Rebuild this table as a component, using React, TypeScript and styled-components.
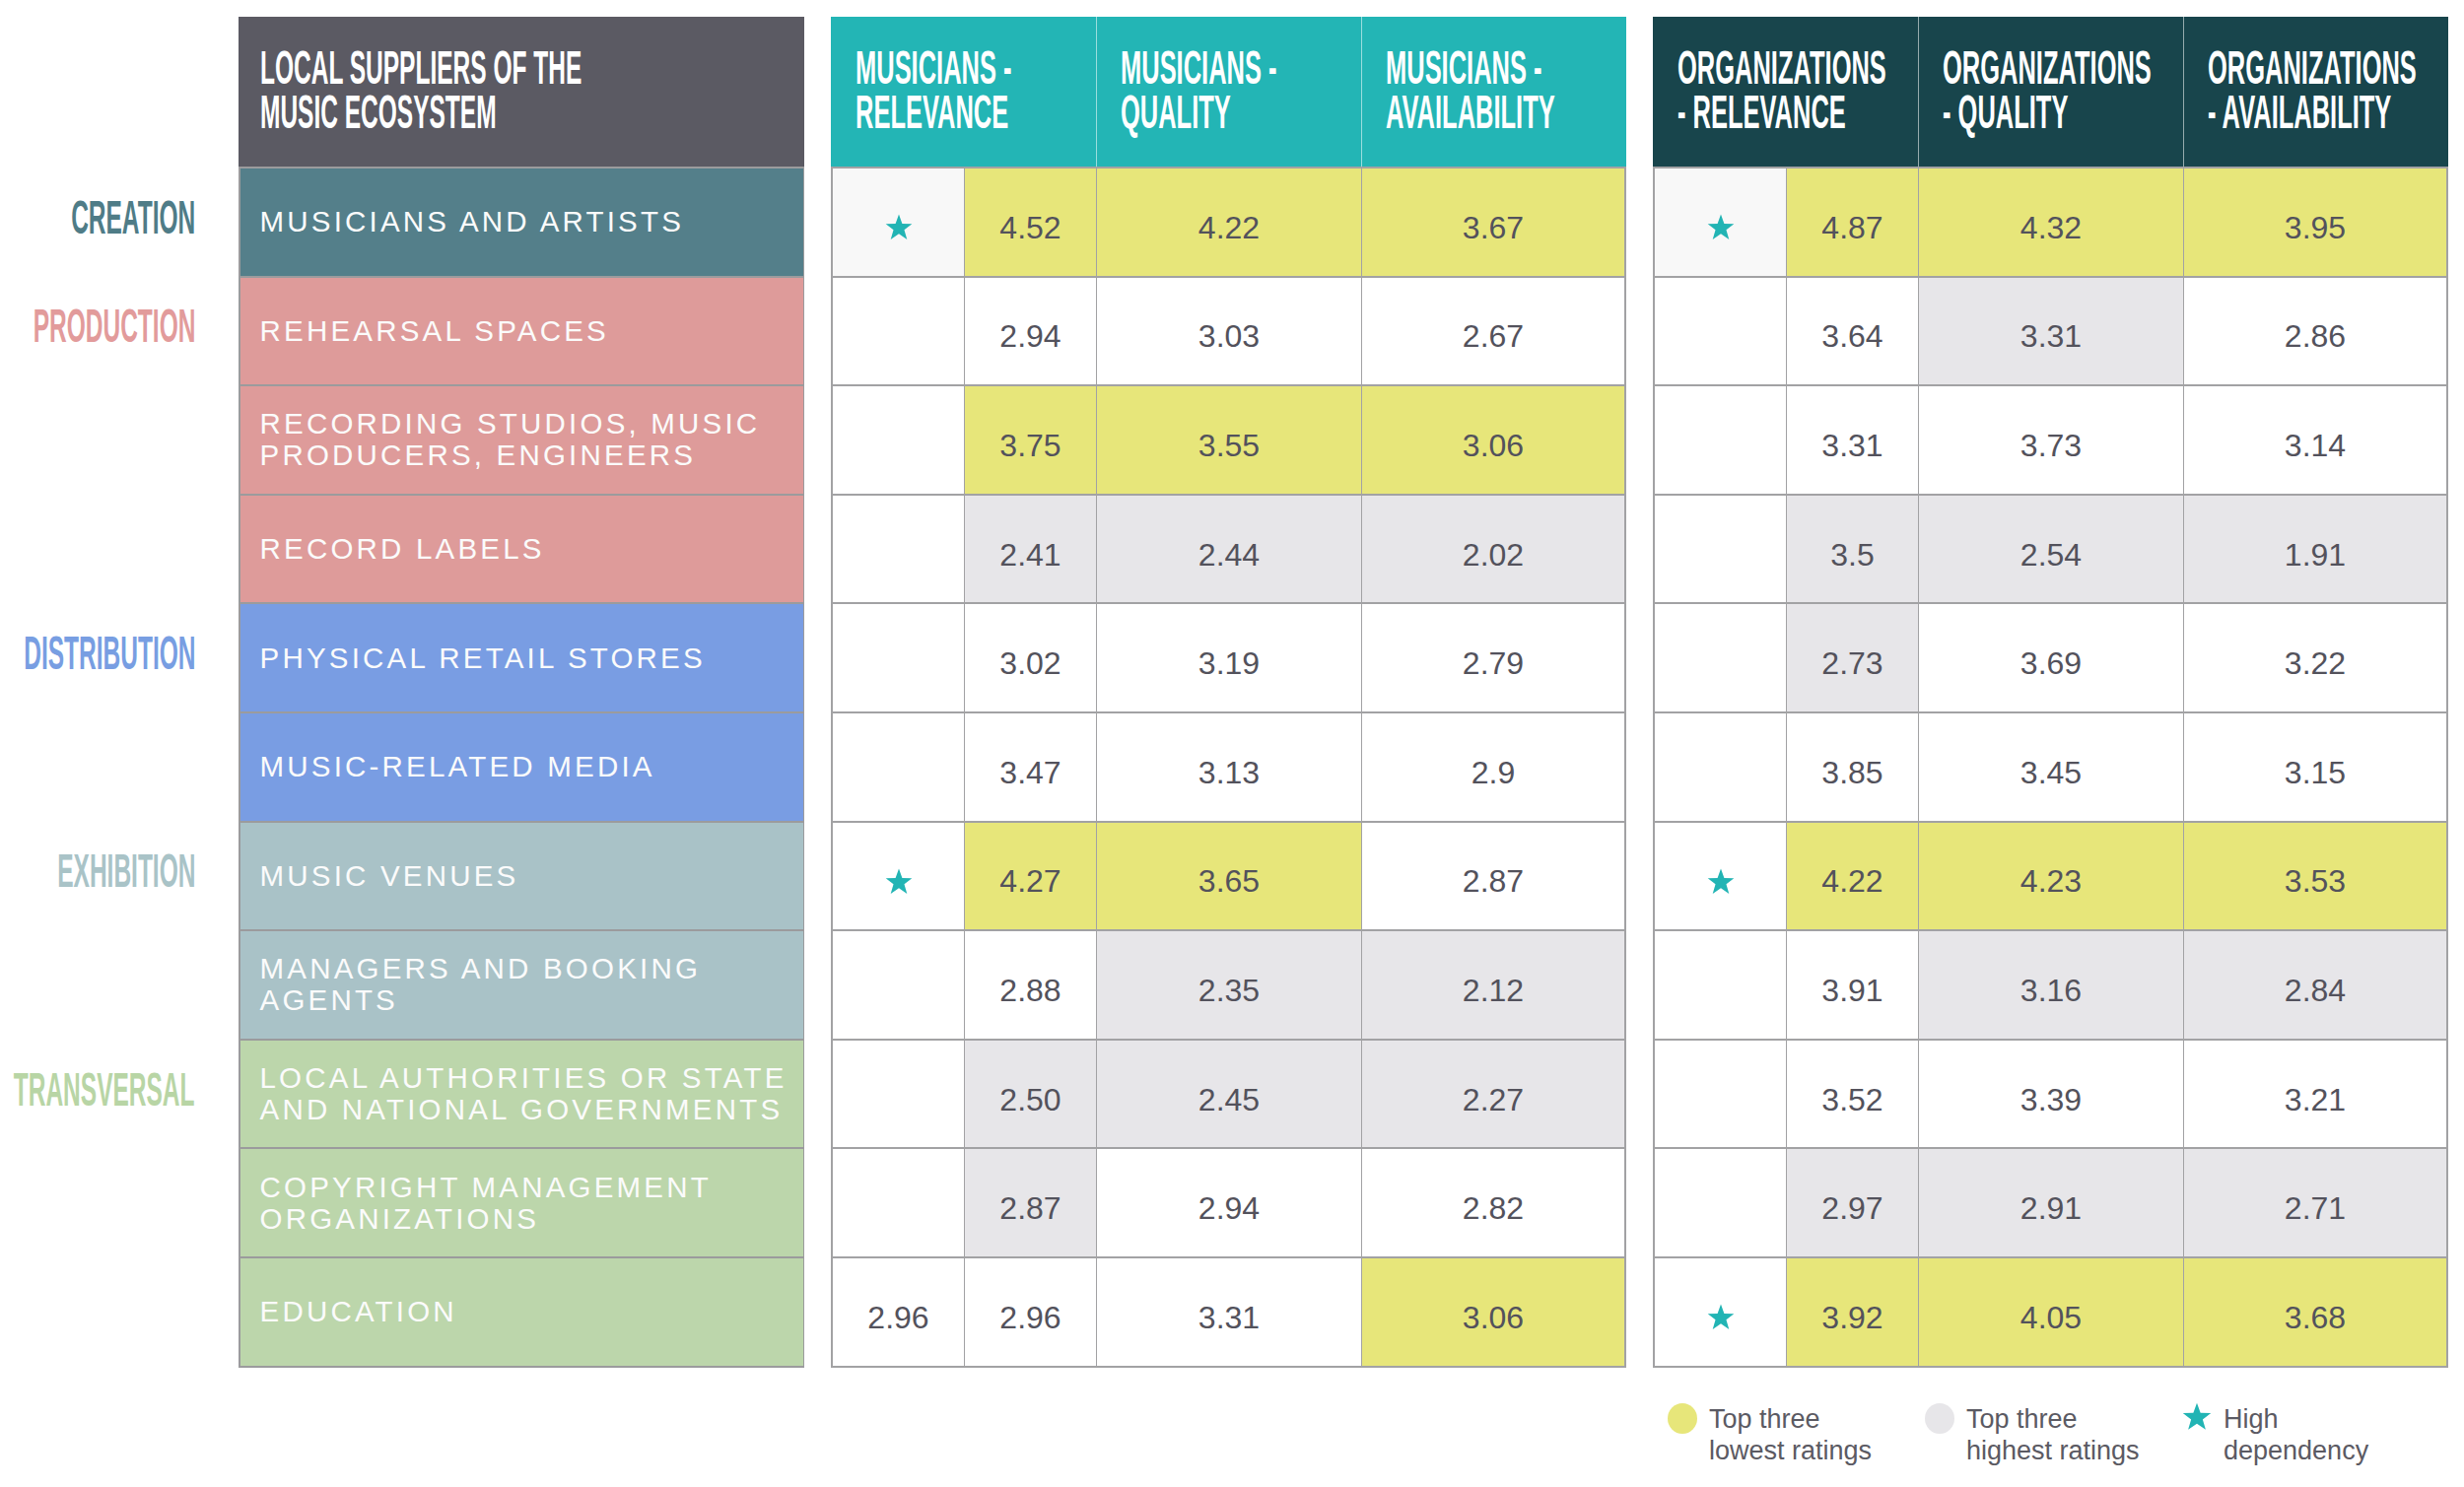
import React from "react";
import styled, { createGlobalStyle } from "styled-components";

type Tone = "plain" | "low" | "high" | "soft";
type GroupKey = "creation" | "production" | "distribution" | "exhibition" | "transversal";

interface Rating {
  v: string;
  t: Tone;
}

interface Row {
  name: string[];
  group: GroupKey;
  lead?: boolean;
  musicians: [string, Rating, Rating, Rating];
  orgs: [string, Rating, Rating, Rating];
}

const HEAD_H = 152;
const ROW_PITCH = 110.6;
const LINE = "#a2a2a4";

const groups: Record<GroupKey, { label: string; ink: string; fill: string }> = {
  creation: { label: "CREATION", ink: "#4f7c87", fill: "#547f8a" },
  production: { label: "PRODUCTION", ink: "#e29b9b", fill: "#de9b9a" },
  distribution: { label: "DISTRIBUTION", ink: "#789ee2", fill: "#799de3" },
  exhibition: { label: "EXHIBITION", ink: "#a9c3c7", fill: "#a9c2c7" },
  transversal: { label: "TRANSVERSAL", ink: "#b8d5a5", fill: "#bcd6ab" },
};

const tones: Record<Tone, string> = {
  plain: "#ffffff",
  low: "#e7e67a",
  high: "#e7e6e9",
  soft: "#f8f8f8",
};

const c = (v: string, t: Tone = "plain"): Rating => ({ v, t });

const rows: Row[] = [
  {
    name: ["MUSICIANS AND ARTISTS"],
    group: "creation",
    lead: true,
    musicians: ["star", c("4.52", "low"), c("4.22", "low"), c("3.67", "low")],
    orgs: ["star", c("4.87", "low"), c("4.32", "low"), c("3.95", "low")],
  },
  {
    name: ["REHEARSAL SPACES"],
    group: "production",
    lead: true,
    musicians: ["", c("2.94"), c("3.03"), c("2.67")],
    orgs: ["", c("3.64"), c("3.31", "high"), c("2.86")],
  },
  {
    name: ["RECORDING STUDIOS, MUSIC", "PRODUCERS, ENGINEERS"],
    group: "production",
    musicians: ["", c("3.75", "low"), c("3.55", "low"), c("3.06", "low")],
    orgs: ["", c("3.31"), c("3.73"), c("3.14")],
  },
  {
    name: ["RECORD LABELS"],
    group: "production",
    musicians: ["", c("2.41", "high"), c("2.44", "high"), c("2.02", "high")],
    orgs: ["", c("3.5", "high"), c("2.54", "high"), c("1.91", "high")],
  },
  {
    name: ["PHYSICAL RETAIL STORES"],
    group: "distribution",
    lead: true,
    musicians: ["", c("3.02"), c("3.19"), c("2.79")],
    orgs: ["", c("2.73", "high"), c("3.69"), c("3.22")],
  },
  {
    name: ["MUSIC-RELATED MEDIA"],
    group: "distribution",
    musicians: ["", c("3.47"), c("3.13"), c("2.9")],
    orgs: ["", c("3.85"), c("3.45"), c("3.15")],
  },
  {
    name: ["MUSIC VENUES"],
    group: "exhibition",
    lead: true,
    musicians: ["star", c("4.27", "low"), c("3.65", "low"), c("2.87")],
    orgs: ["star", c("4.22", "low"), c("4.23", "low"), c("3.53", "low")],
  },
  {
    name: ["MANAGERS AND BOOKING", "AGENTS"],
    group: "exhibition",
    musicians: ["", c("2.88"), c("2.35", "high"), c("2.12", "high")],
    orgs: ["", c("3.91"), c("3.16", "high"), c("2.84", "high")],
  },
  {
    name: ["LOCAL AUTHORITIES OR STATE", "AND NATIONAL GOVERNMENTS"],
    group: "transversal",
    lead: true,
    musicians: ["", c("2.50", "high"), c("2.45", "high"), c("2.27", "high")],
    orgs: ["", c("3.52"), c("3.39"), c("3.21")],
  },
  {
    name: ["COPYRIGHT MANAGEMENT", "ORGANIZATIONS"],
    group: "transversal",
    musicians: ["", c("2.87", "high"), c("2.94"), c("2.82")],
    orgs: ["", c("2.97", "high"), c("2.91", "high"), c("2.71", "high")],
  },
  {
    name: ["EDUCATION"],
    group: "transversal",
    musicians: ["2.96", c("2.96"), c("3.31"), c("3.06", "low")],
    orgs: ["star", c("3.92", "low"), c("4.05", "low"), c("3.68", "low")],
  },
];

const GlobalStyle = createGlobalStyle`
  html, body {
    margin: 0;
    padding: 0;
    background: #ffffff;
  }
  body {
    font-family: "Liberation Sans", Arial, sans-serif;
    color: #53525c;
  }
`;

const Page = styled.div`
  width: 2500px;
  height: 1509px;
  box-sizing: border-box;
  padding-top: 17px;
  overflow: hidden;
`;

const Board = styled.div`
  display: flex;
  align-items: flex-start;
  gap: 27px;
`;

const Condensed = styled.span<{ $squeeze: number; $origin: "left" | "right" }>`
  display: inline-block;
  flex: none;
  white-space: nowrap;
  transform: scaleX(${(p) => p.$squeeze});
  transform-origin: ${(p) => p.$origin} center;
`;

const LabelColumn = styled.div`
  width: 215px;
  flex: none;
  display: grid;
  grid-template-columns: minmax(0, 1fr);
  grid-template-rows: ${HEAD_H + 2}px repeat(11, ${ROW_PITCH}px);
`;

const GroupLabel = styled.div<{ $ink: string }>`
  min-width: 0;
  display: flex;
  align-items: center;
  justify-content: flex-end;
  padding: 0 17px 12px 0;
  color: ${(p) => p.$ink};
  font-size: 49px;
  font-weight: 700;
  line-height: 45px;
`;

const SupplierTable = styled.div`
  width: 574px;
  flex: none;
  display: flex;
  flex-direction: column;
`;

const SupplierHead = styled.div`
  height: ${HEAD_H}px;
  box-sizing: border-box;
  background: #5b5a63;
  color: #ffffff;
  display: flex;
  align-items: center;
  padding: 0 0 4px 22px;
  font-size: 49px;
  font-weight: 700;
  line-height: 45px;
`;

const SupplierBody = styled.div`
  display: grid;
  grid-template-columns: minmax(0, 1fr);
  grid-template-rows: repeat(11, ${ROW_PITCH - 2}px);
  row-gap: 2px;
  padding: 2px 1.5px;
  background: #9b9b9d;
`;

const SupplierCell = styled.div<{ $fill: string }>`
  background: ${(p) => p.$fill};
  display: flex;
  align-items: center;
  padding-left: 20px;
  color: #fbfbfb;
  font-size: 29.5px;
  letter-spacing: 3.2px;
  line-height: 32px;
  white-space: nowrap;
  overflow: hidden;
`;

const RatingColumn = styled.div`
  width: 807px;
  flex: none;
  display: flex;
  flex-direction: column;
`;

const RatingHead = styled.div<{ $fill: string }>`
  height: ${HEAD_H}px;
  display: grid;
  grid-template-columns: repeat(3, minmax(0, 1fr));
  background: ${(p) => p.$fill};
`;

const HeadCell = styled.div`
  min-width: 0;
  display: flex;
  align-items: center;
  padding: 0 0 4px 25px;
  color: #ffffff;
  font-size: 49px;
  font-weight: 700;
  line-height: 45px;
  & + & {
    border-left: 1px solid rgba(255, 255, 255, 0.55);
    padding-left: 24px;
  }
`;

const RatingBody = styled.div`
  display: grid;
  grid-template-columns: 133px 133px 268px 266px;
  grid-template-rows: repeat(11, ${ROW_PITCH - 2}px);
  column-gap: 1px;
  row-gap: 2px;
  padding: 2px;
  background: ${LINE};
`;

const ValueCell = styled.div<{ $tone: Tone }>`
  background: ${(p) => tones[p.$tone]};
  display: flex;
  align-items: center;
  justify-content: center;
  padding-top: 12px;
  box-sizing: border-box;
  font-size: 32px;
  color: #53525c;
`;

const StarMark = styled.svg<{ $size: number }>`
  width: ${(p) => p.$size}px;
  height: ${(p) => p.$size}px;
  fill: #22b4b4;
  display: block;
`;

const Legend = styled.div`
  display: grid;
  grid-template-columns: 261px 261px auto;
  margin-top: 36px;
  padding-left: 15px;
`;

const LegendItem = styled.div`
  display: flex;
  align-items: flex-start;
  gap: 12px;
`;

const Dot = styled.span<{ $fill: string }>`
  width: 30px;
  height: 31px;
  border-radius: 50%;
  background: ${(p) => p.$fill};
  flex: none;
`;

const LegendStar = styled.span`
  width: 30px;
  flex: none;
  display: flex;
  justify-content: center;
  margin-top: -1px;
`;

const LegendText = styled.div`
  font-size: 27px;
  line-height: 32px;
  color: #5b5a63;
  white-space: nowrap;
`;

const Star = ({ size }: { size: number }) => (
  <StarMark $size={size} viewBox="0 0 24 24">
    <polygon points="12,0.5 14.9,8.5 23.4,8.8 16.7,14 19.1,22.2 12,17.4 4.9,22.2 7.3,14 0.6,8.8 9.1,8.5" />
  </StarMark>
);

const RatingTable = ({
  fill,
  titles,
  pick,
  children,
}: {
  fill: string;
  titles: [string, string][];
  pick: (r: Row) => [string, Rating, Rating, Rating];
  children?: React.ReactNode;
}) => (
  <RatingColumn>
    <RatingHead $fill={fill}>
      {titles.map(([a, b]) => (
        <HeadCell key={a + b}>
          <Condensed $squeeze={0.52} $origin="left">
            {a}
            <br />
            {b}
          </Condensed>
        </HeadCell>
      ))}
    </RatingHead>
    <RatingBody>
      {rows.map((row, i) => {
        const [dep, ...vals] = pick(row);
        return (
          <React.Fragment key={i}>
            <ValueCell $tone={i === 0 ? "soft" : "plain"}>
              {dep === "star" ? <Star size={28} /> : dep}
            </ValueCell>
            {vals.map((cell, j) => (
              <ValueCell key={j} $tone={cell.t}>
                {cell.v}
              </ValueCell>
            ))}
          </React.Fragment>
        );
      })}
    </RatingBody>
    {children}
  </RatingColumn>
);

export default function App() {
  return (
    <Page>
      <GlobalStyle />
      <Board>
        <LabelColumn>
          <div />
          {rows.map((row, i) => (
            <GroupLabel key={i} $ink={groups[row.group].ink}>
              {row.lead && (
                <Condensed $squeeze={0.5} $origin="right">
                  {groups[row.group].label}
                </Condensed>
              )}
            </GroupLabel>
          ))}
        </LabelColumn>

        <SupplierTable>
          <SupplierHead>
            <Condensed $squeeze={0.5} $origin="left">
              LOCAL SUPPLIERS OF THE
              <br />
              MUSIC ECOSYSTEM
            </Condensed>
          </SupplierHead>
          <SupplierBody>
            {rows.map((row, i) => (
              <SupplierCell key={i} $fill={groups[row.group].fill}>
                <div>
                  {row.name.map((line) => (
                    <div key={line}>{line}</div>
                  ))}
                </div>
              </SupplierCell>
            ))}
          </SupplierBody>
        </SupplierTable>

        <RatingTable
          fill="#23b5b5"
          titles={[
            ["MUSICIANS -", "RELEVANCE"],
            ["MUSICIANS -", "QUALITY"],
            ["MUSICIANS -", "AVAILABILITY"],
          ]}
          pick={(r) => r.musicians}
        />

        <RatingTable
          fill="#18454c"
          titles={[
            ["ORGANIZATIONS", "- RELEVANCE"],
            ["ORGANIZATIONS", "- QUALITY"],
            ["ORGANIZATIONS", "- AVAILABILITY"],
          ]}
          pick={(r) => r.orgs}
        >
          <Legend>
            <LegendItem>
              <Dot $fill="#e7e67a" />
              <LegendText>
                Top three
                <br />
                lowest ratings
              </LegendText>
            </LegendItem>
            <LegendItem>
              <Dot $fill="#e7e6e9" />
              <LegendText>
                Top three
                <br />
                highest ratings
              </LegendText>
            </LegendItem>
            <LegendItem>
              <LegendStar>
                <Star size={30} />
              </LegendStar>
              <LegendText>
                High
                <br />
                dependency
              </LegendText>
            </LegendItem>
          </Legend>
        </RatingTable>
      </Board>
    </Page>
  );
}
